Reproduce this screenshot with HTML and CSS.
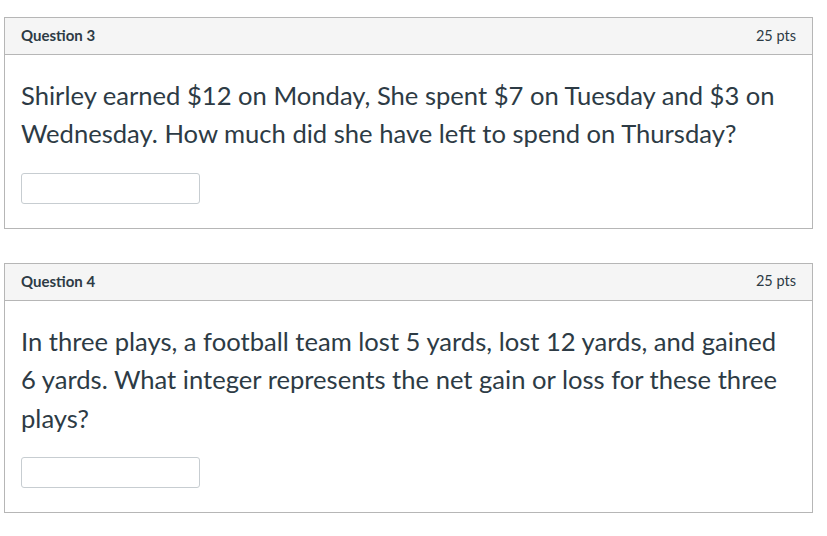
FILE: index.html
```html
<!DOCTYPE html>
<html>
<head>
<meta charset="utf-8">
<link rel="stylesheet" href="styles.css">
</head>
<body>
<div class="quiz">
  <div class="question">
    <div class="q-header">
      <span class="q-name">Question 3</span>
      <span class="q-pts">25 pts</span>
    </div>
    <div class="q-body">
      <p class="q-text">Shirley earned $12 on Monday, She spent $7 on Tuesday and $3 on Wednesday. How much did she have left to spend on Thursday?</p>
      <input class="q-input" type="text">
    </div>
  </div>
  <div class="question">
    <div class="q-header">
      <span class="q-name">Question 4</span>
      <span class="q-pts">25 pts</span>
    </div>
    <div class="q-body">
      <p class="q-text">In three plays, a football team lost 5 yards, lost 12 yards, and gained 6 yards. What integer represents the net gain or loss for these three plays?</p>
      <input class="q-input" type="text">
    </div>
  </div>
</div>
</body>
</html>
```
FILE: styles.css
```css
html, body {
  margin: 0;
  padding: 0;
  background: #ffffff;
}
body {
  font-family: Lato, "Noto Sans", sans-serif;
  color: #2d3b45;
}
.quiz {
  display: flex;
  flex-direction: column;
  gap: 34px;
  padding: 17px 14px 0 4px;
}
.question {
  border: 1px solid #b6b6b6;
  background: #fff;
}
.q-header {
  display: flex;
  justify-content: space-between;
  align-items: center;
  box-sizing: border-box;
  height: 37px;
  padding: 0 16px 2px;
  background: #f5f5f5;
  border-bottom: 1px solid #b6b6b6;
  font-size: 15px;
}
.q-name {
  font-weight: 700;
}
.q-pts {
  font-weight: 400;
  font-size: 14.5px;
}
.q-body {
  padding: 21px 16px 24px;
}
.q-text {
  margin: 0 0 20px;
  font-size: 25.6px;
  line-height: 38.4px;
}
.q-input {
  display: block;
  box-sizing: border-box;
  width: 179px;
  height: 31px;
  margin: 0;
  border: 1px solid #c7cdd1;
  border-radius: 3px;
  background: #fff;
}
```
